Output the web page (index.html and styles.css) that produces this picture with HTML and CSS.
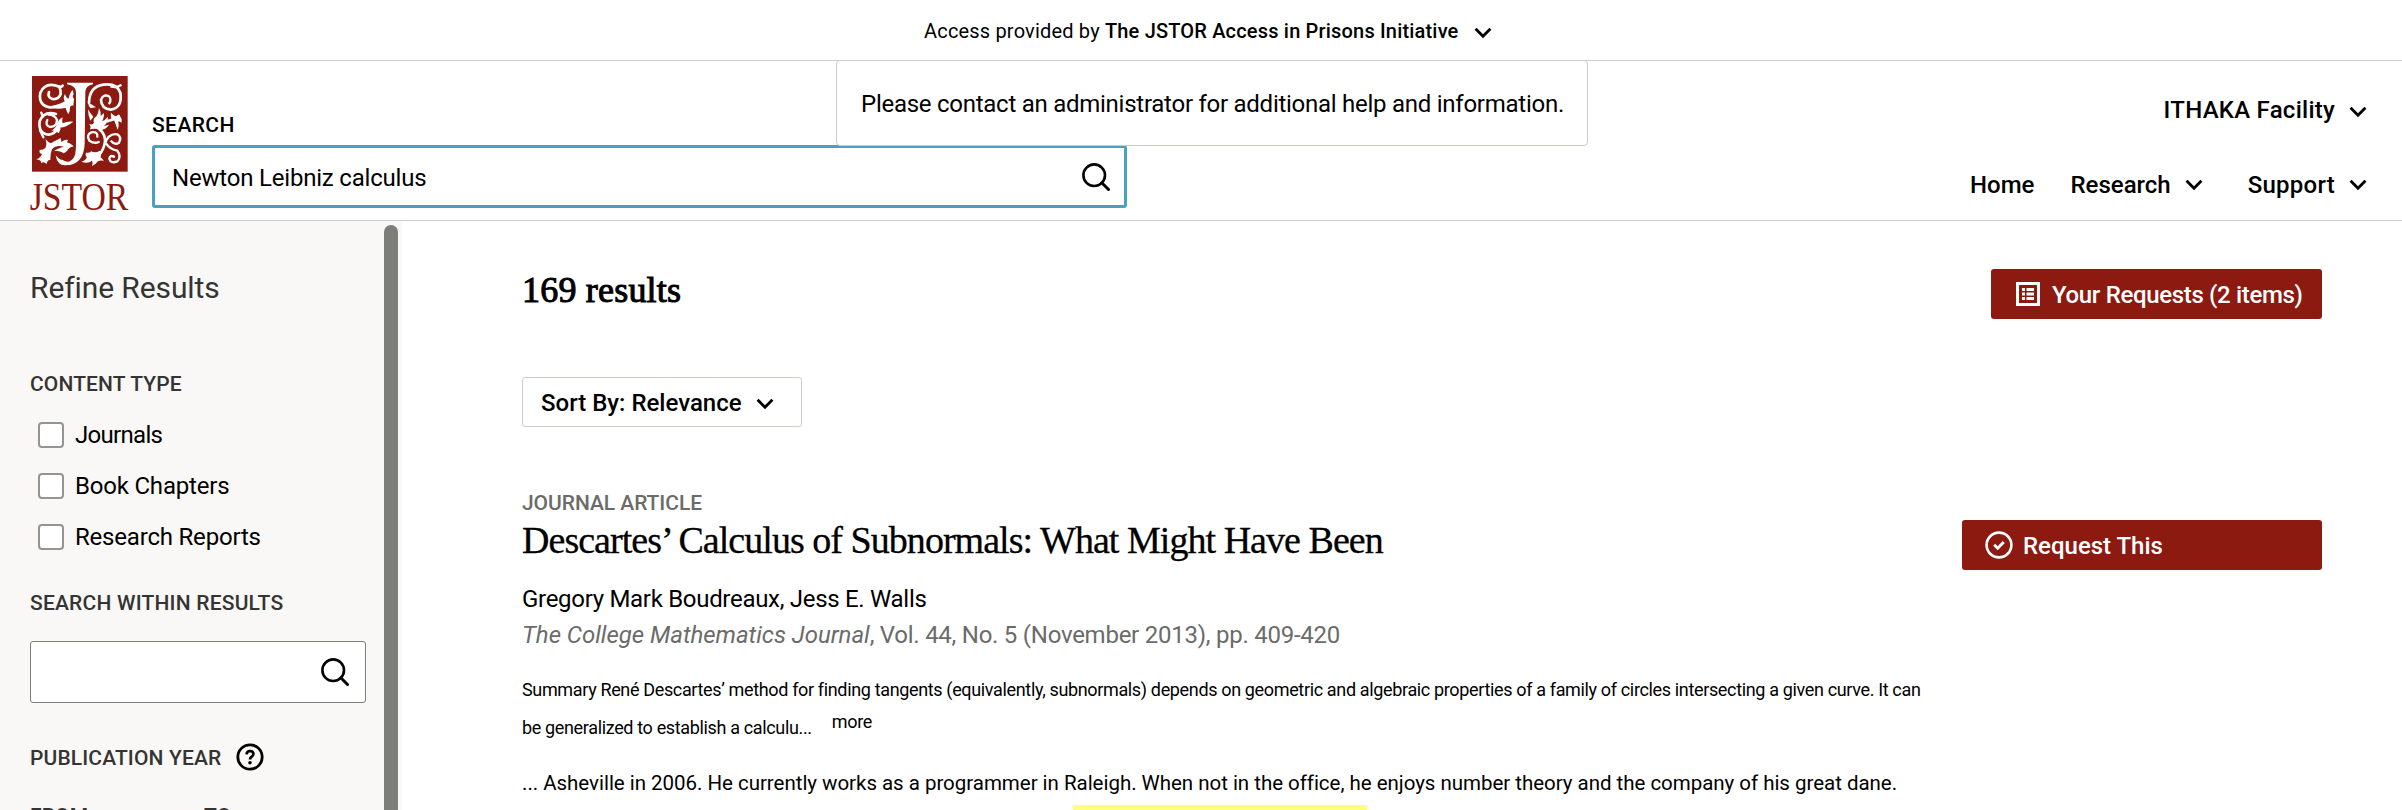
FILE: index.html
```html
<!DOCTYPE html>
<html lang="en">
<head>
<meta charset="utf-8">
<title>JSTOR: Search Results</title>
<link rel="stylesheet" href="styles.css">
</head>
<body>
<svg class="defs" aria-hidden="true">
  <symbol id="chevron" viewBox="0 0 18 12"><path d="M1.6 1.8 L9 9.3 L16.4 1.8" fill="none" stroke="currentColor" stroke-width="2.8"/></symbol>
  <symbol id="search" viewBox="0 0 28 28"><circle cx="12.2" cy="12.2" r="10.8" fill="none" stroke="currentColor" stroke-width="2.6"/><path d="M19.8 19.8 L26.5 26.5" stroke="currentColor" stroke-width="3" stroke-linecap="round"/></symbol>
</svg>

<div class="access">
  <span class="access-text">Access provided by <strong>The JSTOR Access in Prisons Initiative</strong></span>
  <svg class="chevron"><use href="#chevron"/></svg>
  <div class="access-menu">Please contact an administrator for additional help and information.</div>
</div>

<header class="header">
  <svg class="logo" viewBox="0 0 312 432" role="img" aria-label="JSTOR">
    <rect x="12" y="12" width="287" height="287" fill="#8c1a11"/>
    <g fill="#fff">
      <path d="M117 32 H195 V37 Q172 42 172 60 L170 215 Q167 279 112 280 Q88 281 83 250 Q92 262 104 264 Q124 278 138 256 Q144 246 144 215 V60 Q144 42 117 37Z"/>
      <path d="M74 101 Q98 96 110 88 Q104 76 111 66 Q114 78 122 80 Q125 62 134 54 L137 66 Q131 75 138 80 L136 101 Q130 100 126 105 Q127 118 121 127 Q115 118 113 108 Q92 112 74 109Z"/>
      <path d="M88 152 Q94 140 104 136 Q101 148 104 154 Q118 147 136 149 Q126 156 120 160 Q108 168 98 166 Q98 176 92 184 Q84 174 70 176 Q86 166 88 152Z"/>
      <path d="M52 201 Q60 210 68 214 L98 198 L100 210 Q110 202 120 204 L117 211 Q128 214 137 223 Q124 226 120 232 Q118 240 106 244 Q100 236 78 236 Q98 226 108 224 Q84 218 72 232 Q66 246 67 264 Q58 262 56 276 Q46 266 40 274 Q40 264 25 262 Q38 258 42 246 Q32 244 35 234 Q46 234 52 228 Q58 218 52 201Z"/>
      <path d="M181 92 Q194 98 204 106 L188 109 Q180 102 181 92Z"/>
      <path d="M180 112 Q188 126 196 134 Q192 140 187 146 Q180 130 180 112Z"/>
      <path d="M213 108 Q220 120 218 132 L228 123 Q228 140 222 148 Q232 144 240 134 Q240 152 228 162 L243 158 Q234 174 214 174 Q204 168 186 172 Q190 164 184 156 Q194 160 198 152 Q194 142 202 136 Q210 130 213 108Z"/>
      <path d="M249 122 Q260 136 276 132 Q284 142 281 152 L271 147 Q274 162 269 174 Q264 158 259 146 Q246 146 249 122Z"/>
      <path d="M160 269 Q174 266 176 256 Q170 250 174 242 Q184 244 190 238 Q200 244 216 236 Q222 246 218 256 L228 266 Q216 264 210 268 Q204 276 192 282 Q196 272 192 266 Q180 276 160 269Z"/>
    </g>
    <g fill="none" stroke="#fff" stroke-width="8" stroke-linecap="round">
      <path d="M104 41 Q101 46 94 44 Q52 28 37 62 Q30 100 66 106 Q84 106 110 96"/>
      <path d="M63 60 Q58 76 73 81 Q92 83 98 66 Q99 56 94 44"/>
      <path d="M84 126 Q48 116 35 148 Q30 184 62 188 Q80 186 90 168"/>
      <path d="M58 144 Q50 160 66 165 Q86 165 87 144 Q80 128 62 128" stroke-width="7"/>
      <path d="M40 122 L44 134 M36 175 L46 196" stroke-width="7"/>
      <path d="M183 92 Q184 44 226 38 Q266 32 277 62 Q284 108 248 113 Q220 110 219 84"/>
      <path d="M219 84 Q224 66 242 72 Q252 82 244 94 M250 44 Q266 48 278 40" stroke-width="7"/>
      <path d="M238 148 Q264 140 272 132"/>
      <path d="M212 170 Q236 188 230 216 Q222 246 204 256"/>
      <path d="M212 210 Q200 216 184 206 Q174 188 190 181 Q210 178 208 194" stroke-width="7"/>
      <path d="M230 216 Q242 182 268 187 Q282 196 273 212 Q260 220 250 208 M234 214 Q246 232 268 236 Q282 254 268 268 Q248 276 244 260 Q246 248 258 254" stroke-width="7"/>
    </g>
    <text class="logo-text" x="5" y="415" textLength="296" lengthAdjust="spacingAndGlyphs">JSTOR</text>
  </svg>

  <form class="search">
    <label class="search-label">SEARCH</label>
    <div class="search-box"><span>Newton Leibniz calculus</span><svg class="search-icon"><use href="#search"/></svg></div>
  </form>

  <div class="header-right">
    <div class="nav"><span class="item">ITHAKA Facility</span><svg class="chevron"><use href="#chevron"/></svg></div>
    <nav class="nav nav-main">
      <span class="item home">Home</span>
      <span class="item tight">Research</span><svg class="chevron after-research"><use href="#chevron"/></svg>
      <span class="item">Support</span><svg class="chevron"><use href="#chevron"/></svg>
    </nav>
  </div>
</header>

<div class="page">
  <aside class="sidebar">
    <div class="filters">
      <h2 class="refine">Refine Results</h2>
      <h3 class="filter-title">CONTENT TYPE</h3>
      <ul class="checks">
        <li><i class="box"></i><span class="journals">Journals</span></li>
        <li><i class="box"></i><span>Book Chapters</span></li>
        <li><i class="box"></i><span>Research Reports</span></li>
      </ul>
      <h3 class="filter-title within">SEARCH WITHIN RESULTS</h3>
      <div class="within-box"><svg class="search-icon"><use href="#search"/></svg></div>
      <h3 class="filter-title year">PUBLICATION YEAR
        <svg class="help" viewBox="0 0 28 28"><circle cx="14" cy="14" r="12.2" fill="none" stroke="#000" stroke-width="2.8"/><path d="M10.6 11.3 Q10.8 8 14.1 8 Q17.4 8.1 17.4 11 Q17.3 12.8 15.6 13.7 Q14 14.6 14 16.6" fill="none" stroke="#000" stroke-width="2.7"/><circle cx="14" cy="19.7" r="1.8"/></svg>
      </h3>
      <div class="filter-title range"><span>FROM</span><span>TO</span></div>
    </div>
    <div class="scrollbar"></div>
  </aside>

  <main class="main">
    <div class="results-head">
      <h1 class="count">169 results</h1>
      <div class="button requests">
        <svg class="list-icon" viewBox="0 0 24 24" fill="#fff"><path d="M0 0H24V24H0Z M3 3V21H21V3Z" fill-rule="evenodd"/><path d="M6 6h3v3H6z M10.5 6H18v3h-7.500z M6 10.500h3v3H6z M10.500 10.500H18v3h-7.500z M6 15h3v3H6z M10.500 15H18v3h-7.500z"/></svg>
        <span>Your Requests (2 items)</span>
      </div>
    </div>

    <div class="sort"><span>Sort By: Relevance</span><svg class="chevron"><use href="#chevron"/></svg></div>

    <article class="result">
      <div class="result-body">
        <div class="kind">JOURNAL ARTICLE</div>
        <h2 class="title">Descartes’ Calculus of Subnormals: What Might Have Been</h2>
        <div class="authors">Gregory Mark Boudreaux, Jess E. Walls</div>
        <div class="source"><em>The College Mathematics Journal</em>, Vol. 44, No. 5 (November 2013), pp. 409-420</div>
        <p class="summary">Summary René Descartes’ method for finding tangents (equivalently, subnormals) depends on geometric and algebraic properties of a family of circles intersecting a given curve. It can<br>be generalized to establish a calculu... <span class="more">more</span></p>
        <p class="snippet">... Asheville in 2006. He currently works as a programmer in Raleigh. When not in the office, he enjoys number theory and the company of his great dane.</p>
        <div class="highlight"></div>
      </div>
      <div class="button request">
        <svg class="check-icon" viewBox="0 0 28 28" fill="none" stroke="#fff"><circle cx="14" cy="14" r="12.4" stroke-width="2.6"/><path d="M9.200 13.800 L12.700 17.200 L18.800 10.900" stroke-width="2.900"/></svg>
        <span>Request This</span>
      </div>
    </article>
  </main>
</div>
</body>
</html>
```
FILE: styles.css
```css
* { box-sizing: border-box; }
html, body { height: 810px; overflow: hidden; }
body {
  margin: 0;
  background: #fff;
  color: #000;
  font-family: Roboto, "Liberation Sans", sans-serif;
  font-size: 24px;
}
h1, h2, h3, p, ul { margin: 0; padding: 0; font-weight: 400; }
ul { list-style: none; }
svg { display: block; flex: none; }
.defs { position: absolute; width: 0; height: 0; }
.chevron { width: 18px; height: 12px; }
.search-icon { width: 28px; height: 28px; }

.access {
  position: relative;
  display: flex;
  align-items: center;
  height: 61px;
  padding: 2px 0 0 924px;
  border-bottom: 1px solid #cfcdc6;
  font-size: 20px;
  letter-spacing: 0.18px;
}
.access-text { white-space: nowrap; }
.access-text strong { font-weight: 500; }
.access .chevron { margin: 3px 0 0 15px; }
.access-menu {
  position: absolute;
  z-index: 2;
  left: 836px;
  top: 60px;
  width: 752px;
  height: 86px;
  border: 1px solid #cfcdc6;
  border-radius: 4px;
  background: #fff;
  padding-left: 24px;
  line-height: 86px;
  font-size: 24px;
  letter-spacing: -0.26px;
  white-space: nowrap;
}

.header {
  display: flex;
  height: 160px;
  padding: 0 35px 0 28px;
  border-bottom: 1px solid #cfcdc6;
}
.logo { width: 104px; height: 144px; margin-top: 11px; overflow: visible; }
.logo-text { font-family: "Liberation Serif", serif; font-size: 119px; fill: #8c1a11; }
.search { width: 975px; margin-left: 20px; padding-top: 49px; }
.search-label {
  display: block;
  line-height: 30px;
  font-size: 21px;
  font-weight: 500;
  letter-spacing: 0.4px;
  margin-bottom: 5px;
}
.search-box {
  display: flex;
  align-items: center;
  justify-content: space-between;
  height: 63px;
  padding: 1px 14px 0 17px;
  border: 3px solid #4ba0c0;
  border-radius: 3px;
  letter-spacing: -0.2px;
}
.search-box span { padding-top: 2px; }
.header-right {
  margin-left: auto;
  display: flex;
  flex-direction: column;
  align-items: flex-end;
  padding-top: 29px;
  font-weight: 500;
}
.nav { display: flex; align-items: center; height: 40px; }
.nav .item { margin-right: 14px; letter-spacing: 0.25px; }
.nav .chevron { margin-top: -1px; }
.nav:first-child .chevron { margin-top: 3px; }
.nav-main { margin-top: 35px; }
.nav .home { margin-right: 36px; letter-spacing: 0; }
.nav .tight { letter-spacing: 0; }
.nav .after-research { margin-right: 45px; }

.page { display: flex; height: 589px; }
.sidebar {
  display: flex;
  justify-content: space-between;
  width: 402px;
  padding: 0 4px 0 30px;
  background: #f9f8f6;
}
.filters { width: 336px; padding-top: 47px; }
.scrollbar {
  width: 14px;
  height: 620px;
  margin-top: 4px;
  border-radius: 7px;
  background: #7d7d7a;
}
.refine { line-height: 40px; font-size: 30px; letter-spacing: -0.1px; color: #343432; margin-bottom: 61px; }
.filter-title {
  display: flex;
  align-items: center;
  height: 30px;
  font-size: 21px;
  font-weight: 500;
  letter-spacing: 0.13px;
  color: #343432;
}
.checks { margin: 10px 0 26px; }
.checks li {
  display: flex;
  align-items: center;
  gap: 11px;
  height: 51px;
  padding-left: 8px;
  letter-spacing: -0.2px;
}
.checks .journals { letter-spacing: -0.7px; }
.box { width: 26px; height: 26px; border: 2px solid #949492; border-radius: 4px; background: #fff; }
.within { letter-spacing: 0.2px; }
.within-box {
  display: flex;
  align-items: center;
  justify-content: flex-end;
  height: 62px;
  margin: 23px 0 40px;
  padding-right: 16px;
  border: 1px solid #7d7d7a;
  border-radius: 3px;
  background: #fff;
}
.year { gap: 15px; }
.help { width: 28px; height: 28px; margin-top: -2px; }
.range { margin-top: 28px; }
.range span:first-child { width: 174px; }

.main { flex: 1; padding: 48px 80px 0 120px; }
.results-head { display: flex; justify-content: space-between; align-items: flex-start; }
.count {
  line-height: 42px;
  font-family: "Liberation Serif", serif;
  font-size: 36px;
  letter-spacing: 0.2px;
  -webkit-text-stroke: 1px #000;
}
.button {
  display: flex;
  align-items: center;
  height: 50px;
  border-radius: 3px;
  background: #8c1a11;
  color: #fff;
  font-weight: 500;
  white-space: nowrap;
}
.button span, .sort span { padding-top: 2px; }
.requests { width: 331px; padding-left: 25px; gap: 12px; letter-spacing: -0.33px; }
.list-icon { width: 24px; height: 24px; }
.sort {
  display: flex;
  align-items: center;
  width: 280px;
  height: 50px;
  margin: 58px 0 61px;
  padding-left: 18px;
  border: 1px solid #cfcdc6;
  border-radius: 3px;
  font-weight: 500;
}
.sort .chevron { margin: 4px 0 0 14px; }

.result { display: flex; justify-content: space-between; align-items: flex-start; white-space: nowrap; }
.result-body { width: 1410px; }
.kind { line-height: 30px; font-size: 21px; font-weight: 500; letter-spacing: -0.05px; color: #6b6b69; }
.title {
  line-height: 44px;
  font-family: "Liberation Serif", serif;
  font-size: 38px;
  letter-spacing: -0.96px;
  -webkit-text-stroke: 0.3px #000;
}
.authors { margin-top: 19px; line-height: 36px; letter-spacing: -0.3px; }
.source { line-height: 36px; letter-spacing: -0.25px; color: #6b6b69; }
.source em { letter-spacing: -0.03px; }
.summary { margin-top: 18px; line-height: 38px; font-size: 18px; letter-spacing: -0.35px; }
.more { display: inline-block; line-height: 20px; margin-left: 16px; vertical-align: 6px; }
.snippet { margin-top: 17px; line-height: 38px; font-size: 20.5px; letter-spacing: -0.028px; }
.highlight { width: 294px; height: 28px; margin: 3px 0 0 551px; background: #ffff7d; }
.request { width: 360px; margin-top: 32px; padding-left: 23px; gap: 10px; }
.check-icon { width: 28px; height: 28px; }
```
